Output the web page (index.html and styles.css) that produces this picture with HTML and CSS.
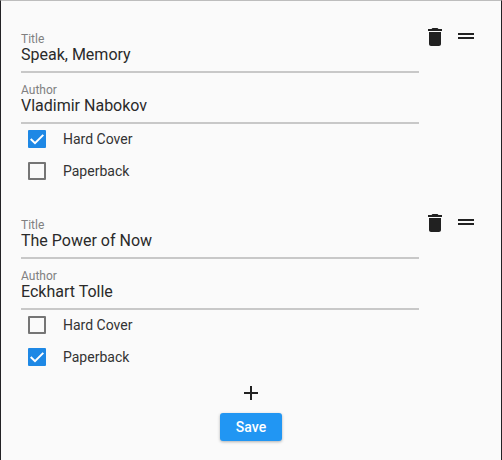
FILE: index.html
```html
<!DOCTYPE html>
<html lang="en">
<head>
<meta charset="utf-8">
<title>Books</title>
<link rel="stylesheet" href="styles.css">
</head>
<body>
<main class="window">
  <section class="book">
    <div class="fields">
      <div class="field"><span class="label">Title</span><span class="value">Speak, Memory</span></div>
      <div class="field"><span class="label">Author</span><span class="value">Vladimir Nabokov</span></div>
      <div class="option"><span class="box checked"><svg viewBox="0 0 18 18"><path d="M2.7 9 7 13.2 15.3 4.9"/></svg></span><span>Hard Cover</span></div>
      <div class="option"><span class="box"></span><span>Paperback</span></div>
    </div>
    <div class="actions">
      <svg class="icon delete" viewBox="0 0 24 24"><path d="M6 19c0 1.1.9 2 2 2h8c1.1 0 2-.9 2-2V7H6v12zM19 4h-3.5l-1-1h-5l-1 1H5v2h14V4z"/></svg>
      <svg class="icon" viewBox="0 0 24 24"><path d="M20 9H4v2h16V9zM4 15h16v-2H4v2z"/></svg>
    </div>
  </section>
  <section class="book">
    <div class="fields">
      <div class="field"><span class="label">Title</span><span class="value">The Power of Now</span></div>
      <div class="field"><span class="label">Author</span><span class="value">Eckhart Tolle</span></div>
      <div class="option"><span class="box"></span><span>Hard Cover</span></div>
      <div class="option"><span class="box checked"><svg viewBox="0 0 18 18"><path d="M2.7 9 7 13.2 15.3 4.9"/></svg></span><span>Paperback</span></div>
    </div>
    <div class="actions">
      <svg class="icon delete" viewBox="0 0 24 24"><path d="M6 19c0 1.1.9 2 2 2h8c1.1 0 2-.9 2-2V7H6v12zM19 4h-3.5l-1-1h-5l-1 1H5v2h14V4z"/></svg>
      <svg class="icon" viewBox="0 0 24 24"><path d="M20 9H4v2h16V9zM4 15h16v-2H4v2z"/></svg>
    </div>
  </section>
  <footer class="footer">
    <svg class="icon" viewBox="0 0 24 24"><path d="M19 13h-6v6h-2v-6H5v-2h6V5h2v6h6v2z"/></svg>
    <button class="save">Save</button>
  </footer>
</main>
</body>
</html>
```
FILE: styles.css
```css
* { box-sizing: border-box; }

body {
  margin: 0;
  font-family: Roboto, "Liberation Sans", sans-serif;
  color: #333;
}

.window {
  height: 460px;
  overflow: hidden;
  padding: 21px 20px 0;
  background: #fafafa;
  border: solid #232225;
  border-width: 1px 1px 0;
  border-top-color: #bdbdbd;
}

.book {
  display: flex;
  height: 186px;
}

.fields { width: 398px; }

.field {
  display: flex;
  flex-direction: column;
  height: 51px;
  padding-top: 10px;
  border-bottom: 2px solid #c8c8c8;
}

.label {
  font-size: 12px;
  line-height: 14px;
  color: #808080;
}

.value {
  font-size: 16px;
  line-height: 18px;
  color: #2a2a2a;
}

.option {
  display: flex;
  align-items: center;
  gap: 17px;
  height: 32px;
  padding-left: 7px;
  font-size: 14px;
}

.field + .option { margin-top: -1px; }

.box {
  display: block;
  width: 18px;
  height: 18px;
  border: 2px solid #757575;
  border-radius: 1px;
}

.checked {
  border: 0;
  background: #1e88e5;
}

.box svg {
  display: block;
  fill: none;
  stroke: #fff;
  stroke-width: 2;
}

.actions {
  display: flex;
  gap: 7px;
  padding: 2px 0 0 4px;
}

.icon {
  width: 24px;
  height: 24px;
  fill: #212121;
}

.delete { margin-top: 1px; }

.footer {
  display: flex;
  flex-direction: column;
  align-items: center;
  gap: 8px;
  margin-top: -13px;
}

.save {
  width: 62px;
  height: 28px;
  padding: 0;
  border: 0;
  border-radius: 3px;
  background: #2196f3;
  color: #fff;
  font: 500 14px Roboto, "Liberation Sans", sans-serif;
  box-shadow: 0 1px 3px rgba(0, 0, 0, 0.3);
}
```
